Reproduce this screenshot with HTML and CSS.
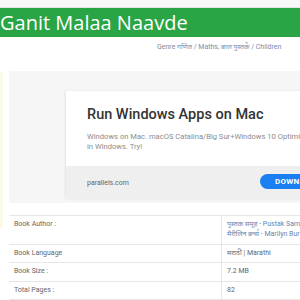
FILE: index.html
```html
<!DOCTYPE html>
<html>
<head>
<meta charset="utf-8">
<link rel="stylesheet" href="styles.css">
</head>
<body>
<div class="topbar"></div>
<header class="header"><h1 class="title">Ganit Malaa Naavde</h1></header>
<div class="genre">Genre <a>गणित / Maths</a>, <a>बाल पुस्तकें / Children</a></div>
<div class="content">
  <div class="sidebar"></div>
  <div class="main">
    <div class="ad-wrap">
      <div class="ad-card">
        <div class="ad-body">
          <div class="ad-title">Run Windows Apps on Mac</div>
          <div class="ad-desc">Windows on Mac. macOS Catalina/Big Sur+Windows 10 Optimized. Run Apps<br>in Windows. Try!</div>
        </div>
        <div class="ad-foot">
          <span class="ad-site">parallels.com</span>
          <span class="ad-btn">DOWNLOAD</span>
        </div>
      </div>
    </div>
    <table class="info">
      <tr><td class="k">Book Author :</td><td class="v"><a>पुस्तक समूह - Pustak Samuh</a><br><a>मैरीलिन बर्न्स - Marilyn Burns</a></td></tr>
      <tr><td class="k">Book Language</td><td class="v">मराठी | Marathi</td></tr>
      <tr><td class="k">Book Size :</td><td class="v">7.2 MB</td></tr>
      <tr><td class="k">Total Pages :</td><td class="v">82</td></tr>
    </table>
  </div>
</div>
</body>
</html>
```
FILE: styles.css
```css
html, body { margin: 0; padding: 0; overflow: hidden; width: 300px; height: 300px; }
body { font-family: Roboto, "Noto Sans", "Noto Sans CJK SC", sans-serif; background: #fff; }
.topbar { height: 7px; background: #f8f8f8; border-bottom: 1px solid #e4e4e4; }
.header { background: #2aa545; height: 29px; width: 600px; }
.title { margin: 0; font-family: "Open Sans", sans-serif; font-weight: 400; font-size: 20px; line-height: 29px; color: #fff; white-space: nowrap; }
.genre { padding-left: 157px; margin-top: 5px; height: 10px; font-size: 7px; line-height: 10px; color: #888; white-space: nowrap; }
.genre a { color: #7a8db0; }
.content { display: flex; margin-top: 19px; width: 700px; }
.sidebar { width: 3px; height: 156px; margin-top: 1px; background: #fafae6; flex: none; }
.main { margin-left: 6px; flex: 1; }
.ad-wrap { background: #f6f6f6; padding: 20px 0 4px 57px; }
.ad-card { background: #fff; box-shadow: -1px 0 2px rgba(0,0,0,0.08); }
.ad-body { height: 75px; padding-left: 21px; box-sizing: border-box; padding-top: 16px; }
.ad-title { font-size: 14.5px; font-weight: 500; color: #333; line-height: 16px; white-space: nowrap; }
.ad-desc { margin-top: 9px; font-size: 7.6px; line-height: 10px; color: #8c8c8c; white-space: nowrap; }
.ad-foot { height: 33px; background: #efefef; display: flex; align-items: center; padding-left: 21px; }
.ad-site { font-size: 7px; color: #666; width: 173px; }
.ad-btn { background: #1a7ff0; color: #fff; font-size: 8px; font-weight: 700; border-radius: 8px; height: 15px; line-height: 15px; padding: 0 10px 0 15px; margin-top: -2px; letter-spacing: 0.3px; }
.info { margin-top: 12px; border-collapse: collapse; width: 500px; font-size: 7px; color: #666; }
.info td { border-top: 1px solid #e6e6e6; border-bottom: 1px solid #e6e6e6; vertical-align: top; padding: 3px 5px 4.5px; line-height: 10px; }
.info td.k { width: 202px; }
.info td.v { border-left: 1px solid #e6e6e6; }
.info a { color: #6a84b0; }
```
